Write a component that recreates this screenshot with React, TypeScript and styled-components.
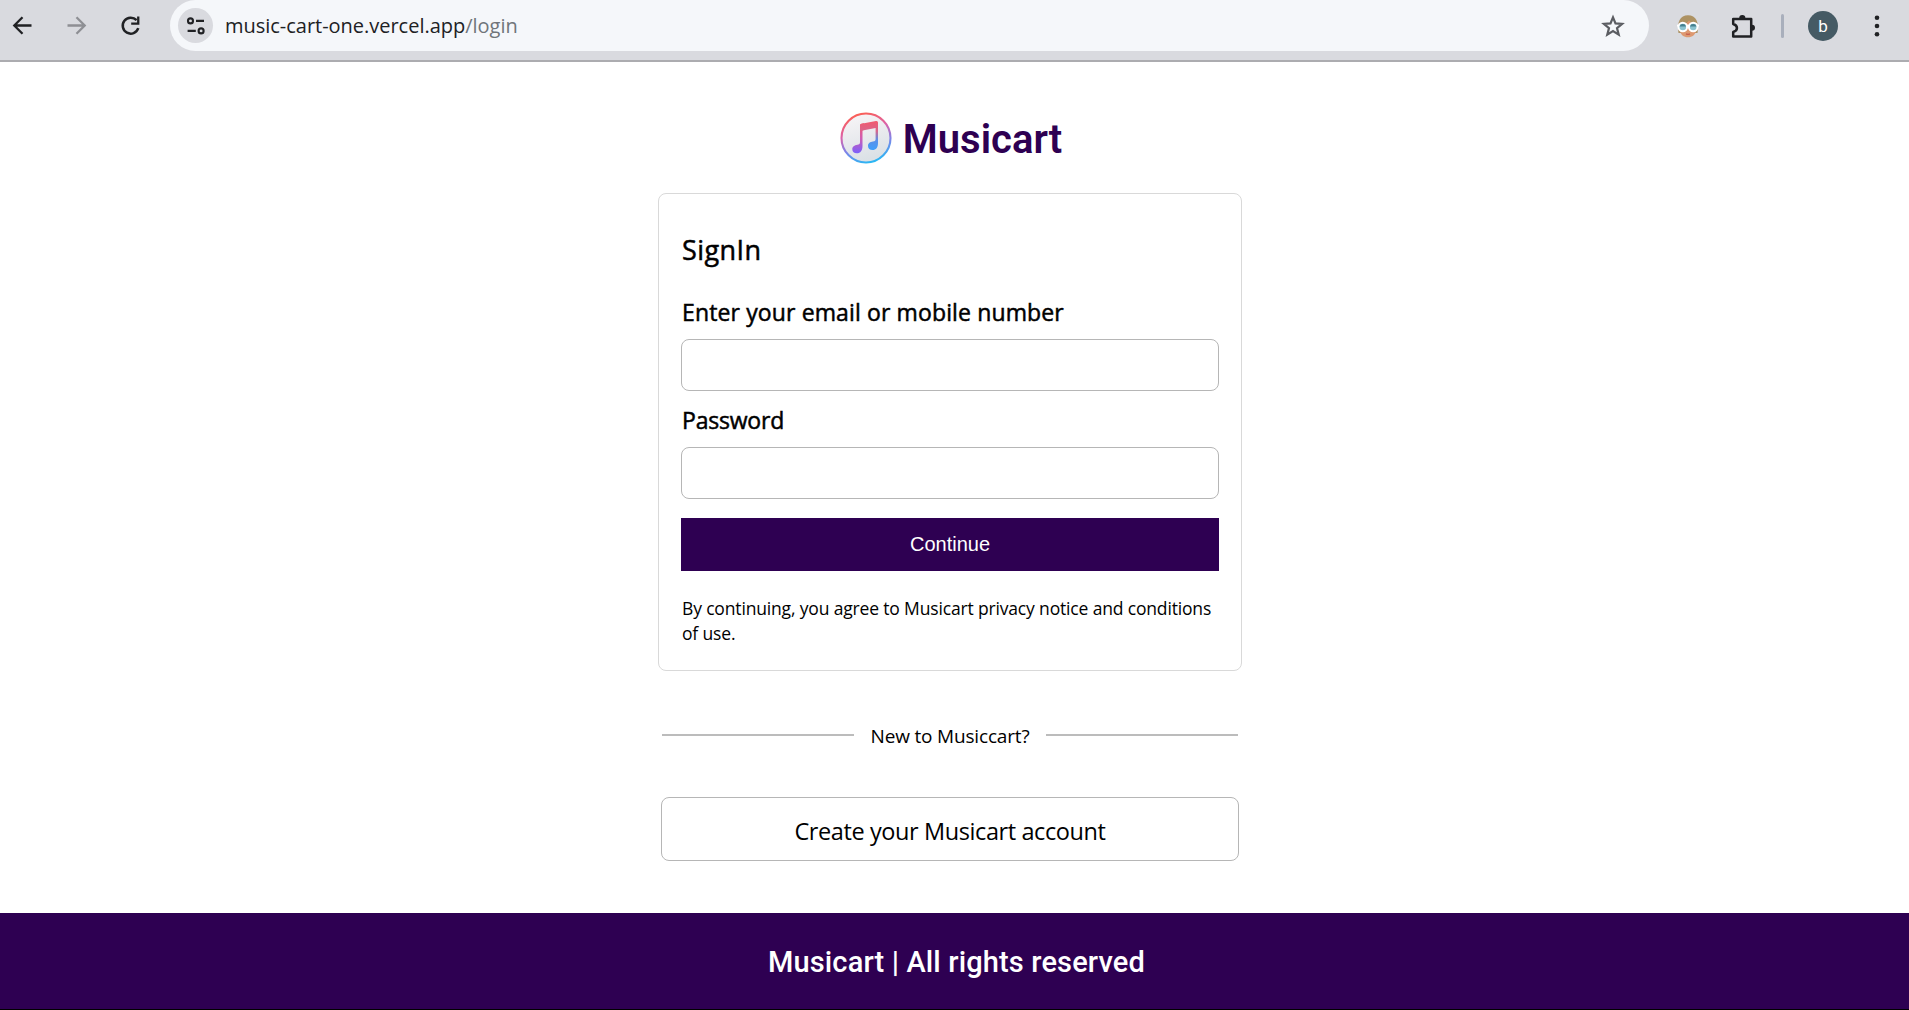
import React from 'react';
import styled, { createGlobalStyle, css } from 'styled-components';

const ui = `'Open Sans', 'Noto Sans', sans-serif`;
const purple = '#2e0052';

const Global = createGlobalStyle`
  * { box-sizing: border-box; }
  body { margin: 0; background: #fff; color: #000; font-family: ${ui}; }
`;

const Page = styled.div`
  display: flex;
  flex-direction: column;
  height: 1010px;
  overflow: hidden;
`;

const Toolbar = styled.header`
  display: flex;
  align-items: flex-start;
  height: 62px;
  background: #d9dadf;
  border-bottom: 2px solid #acacb0;
`;

const NavGroup = styled.div`
  display: flex;
  align-items: center;
  gap: 29px;
  width: 170px;
  height: 51px;
  padding-left: 10px;
`;

const AddressBar = styled.div`
  display: flex;
  align-items: center;
  width: 1479px;
  height: 51px;
  padding: 0 24px 0 8px;
  border-radius: 26px;
  background: #f5f7fa;
`;

const SiteInfo = styled.span`
  display: flex;
  align-items: center;
  justify-content: center;
  width: 35px;
  height: 35px;
  border-radius: 50%;
  background: #d9dadf;
`;

const Url = styled.span`
  flex: 1;
  padding-left: 12px;
  color: #202124;
`;

const Muted = styled.span`
  color: #70757a;
`;

const Actions = styled.div`
  display: flex;
  align-items: center;
  height: 51px;
  padding-left: 27px;
`;

const Extensions = styled.div`
  display: flex;
  align-items: center;
  gap: 30px;
`;

const Separator = styled.span`
  width: 3px;
  height: 24px;
  margin: 0 24px 0 25px;
  border-radius: 2px;
  background: #a9afbc;
`;

const Avatar = styled.span`
  display: flex;
  align-items: center;
  justify-content: center;
  width: 30px;
  height: 30px;
  margin-right: 36px;
  border-radius: 50%;
  background: #455a64;
  color: #fff;
  font: 400 17px/30px Roboto, sans-serif;
`;

const Main = styled.main`
  display: flex;
  flex-direction: column;
  align-items: center;
  height: 851px;
  padding-right: 9px;
`;

const Brand = styled.div`
  display: flex;
  align-items: center;
  gap: 11px;
  height: 52px;
  margin: 50px 0 29px;
  padding-left: 2px;
`;

const BrandName = styled.span`
  padding-top: 3px;
  color: ${purple};
  font: 600 40px/48px Roboto, sans-serif;
`;

const Line = styled.span<{ $size: number; $track?: number; $medium?: boolean }>`
  font-size: ${p => p.$size}px;
  letter-spacing: ${p => p.$track ?? 0}px;
  white-space: nowrap;
  ${p => p.$medium && css`-webkit-text-stroke: 0.5px currentColor;`}
`;

const Card = styled.form`
  display: flex;
  flex-direction: column;
  width: 584px;
  height: 478px;
  padding: 36px 22px 0;
  border: 1px solid #d9d9d9;
  border-radius: 8px;
`;

const Title = styled.h1`
  height: 36px;
  margin: 0 0 31px;
  padding-left: 1px;
  font-weight: 400;
  line-height: 36px;
`;

const Field = styled.label`
  display: flex;
  flex-direction: column;
`;

const Label = styled.span`
  height: 30px;
  margin-bottom: 12px;
  padding-left: 1px;
  line-height: 30px;
`;

const fieldBorder = css`
  border: 1px solid #b6b6b6;
  border-radius: 8px;
`;

const Input = styled.input`
  width: 538px;
  height: 52px;
  padding: 0 12px;
  background: #fff;
  ${fieldBorder}
`;

const Fields = styled.div`
  display: grid;
  row-gap: 14px;
  margin-bottom: 19px;
`;

const Submit = styled.button`
  width: 538px;
  height: 53px;
  border: 0;
  background: ${purple};
  color: #fff;
  font: 400 20px 'Liberation Sans', Arial, sans-serif;
`;

const Notice = styled.p`
  margin: 26px 0 0;
  padding-left: 1px;
  line-height: 23.5px;
`;

const Divider = styled.div`
  display: flex;
  align-items: center;
  justify-content: space-between;
  width: 576px;
  height: 30px;
  margin-top: 49px;
`;

const DividerText = styled.span`
  padding-top: 2px;
`;

const Rule = styled.span`
  width: 192px;
  height: 2px;
  background: #bcbcbc;
`;

const Create = styled.button`
  width: 578px;
  height: 64px;
  margin-top: 47px;
  padding: 3px 0 0;
  background: #fff;
  color: #000;
  font-family: ${ui};
  ${fieldBorder}
`;

const Footer = styled.footer`
  display: flex;
  align-items: center;
  justify-content: center;
  height: 97px;
  padding: 2px 0 0 4px;
  border-bottom: 1px solid #000;
  background: ${purple};
  color: #fff;
  font: 500 29px/40px Roboto, sans-serif;
  letter-spacing: 0.15px;
`;

const Arrow = ({ forward = false }: { forward?: boolean }) => (
  <svg width="25" height="25" viewBox="0 0 25 25" fill="none" stroke={forward ? '#8e8f94' : '#202124'} strokeWidth="2.3">
    <path d={forward ? 'M3.5 12.5H20M12.5 4.3l8.2 8.2-8.2 8.2' : 'M21.5 12.5H5M12.5 4.3l-8.2 8.2 8.2 8.2'} />
  </svg>
);

const Reload = () => (
  <svg width="25" height="25" viewBox="0 0 25 25">
    <path d="M18.6 7.2A8 8 0 1 0 20.3 15.2" fill="none" stroke="#202124" strokeWidth="2.5" />
    <path d="M19.1 3.6h2.3v8.2h-8.2V9.5h5.9z" fill="#202124" />
  </svg>
);

const Tune = () => (
  <svg width="20" height="20" viewBox="0 0 20 20" fill="none" stroke="#202124" strokeWidth="2.1">
    <circle cx="4.5" cy="4.9" r="2.5" />
    <path d="M10 4.9H18M1.600 14.900H9.800" />
    <circle cx="15.1" cy="14.9" r="2.5" />
  </svg>
);

const Star = () => (
  <svg width="24" height="24" viewBox="0 0 24 24" fill="none" stroke="#5b5d62" strokeWidth="2.2">
    <path d="M12 3.300l2.500 6.100 6.600.5-5.100 4.200 1.700 6.500-5.700-3.600-5.700 3.600 1.700-6.500-5.100-4.200 6.600-.5z" />
  </svg>
);

const Face = () => (
  <svg width="24" height="24" viewBox="0 0 24 24">
    <path d="M2.500 19C0.800 8 4 1.200 12 1.200S23.200 8 21.500 19z" fill="#ad9263" />
    <path d="M4 11c4-.3 7.500-2 9-4.500 2 2.300 5 4 7 4.500v5c0 4.700-4 7.300-8 7.300S4 20.700 4 16z" fill="#dd9870" />
    <path d="M1 11.600h22" stroke="#fff" strokeWidth="1.800" />
    <circle cx="6.800" cy="13" r="4.300" fill="#8cc3cf" stroke="#fff" strokeWidth="2" />
    <circle cx="17.200" cy="13" r="4.300" fill="#8cc3cf" stroke="#fff" strokeWidth="2" />
    <path d="M3.600 12.500a3.300 3.300 0 0 1 6.400 0zM14 12.500a3.300 3.300 0 0 1 6.400 0z" fill="#457f8e" />
    <path d="M10 19.800q2 1 4 0" fill="none" stroke="#c9604f" strokeWidth="1.300" />
  </svg>
);

const Puzzle = () => (
  <svg width="26" height="26" viewBox="0 0 26 26">
    <path d="M3.200 6h18v17.500h-18V19c5-1.500 5-6.500 0-8z" fill="none" stroke="#202124" strokeWidth="2.500" strokeLinejoin="round" />
    <path d="M9.200 5a3.100 3.100 0 0 1 6.200 0zM22 11.700a2.800 2.800 0 0 1 0 6z" fill="#202124" />
  </svg>
);

const Dots = () => (
  <svg width="6" height="24" viewBox="0 0 6 24" fill="#202124">
    <circle cx="3" cy="3.700" r="2.300" />
    <circle cx="3" cy="12" r="2.300" />
    <circle cx="3" cy="20.300" r="2.300" />
  </svg>
);

const MusicLogo = () => (
  <svg width="52" height="52" viewBox="0 0 52 52">
    <defs>
      <linearGradient id="ring" x1="0.350" y1="0" x2="0.650" y2="1">
        <stop offset="0" stopColor="#fb5f55" />
        <stop offset="0.350" stopColor="#dc62a8" />
        <stop offset="0.650" stopColor="#7f83e8" />
        <stop offset="1" stopColor="#27b9f4" />
      </linearGradient>
      <linearGradient id="disc" x1="0" y1="0" x2="0.300" y2="1">
        <stop offset="0" stopColor="#faf6f8" />
        <stop offset="1" stopColor="#dbe1e6" />
      </linearGradient>
      <linearGradient id="left" x1="0" y1="0" x2="0" y2="1">
        <stop offset="0" stopColor="#f45a6b" />
        <stop offset="0.500" stopColor="#cf5db4" />
        <stop offset="1" stopColor="#7b60fb" />
      </linearGradient>
      <linearGradient id="right" x1="0" y1="0" x2="0" y2="1">
        <stop offset="0" stopColor="#f2596d" />
        <stop offset="0.350" stopColor="#d8668c" />
        <stop offset="0.650" stopColor="#5b8fe8" />
        <stop offset="1" stopColor="#3f9ffb" />
      </linearGradient>
    </defs>
    <circle cx="26" cy="26" r="24.500" fill="url(#disc)" stroke="url(#ring)" strokeWidth="2.100" />
    <path d="M20 13.500q0-1.500 1.500-1.800L24 11.200V18l-1.500.5V34c0 4.500-2 7.300-5.700 7.300-2.700 0-4.500-1.600-4.500-4 0-3 2.200-4 5-4.600 2-.4 2.700-.8 2.700-2.500z" fill="url(#left)" />
    <path d="M20 13.500q0-1.500 1.500-1.800L36 9q2-.3 2 1.500V31c0 4.500-2 7-5.500 7-2.700 0-4.500-1.500-4.500-4 0-3 2.200-4 5-4.500 2-.4 2.600-.8 2.600-2.500V16L22.500 18.500 20 19z" fill="url(#right)" />
  </svg>
);

export default function App() {
  return (
    <Page>
      <Global />
      <Toolbar>
        <NavGroup>
          <Arrow />
          <Arrow forward />
          <Reload />
        </NavGroup>
        <AddressBar>
          <SiteInfo><Tune /></SiteInfo>
          <Url><Line $size={20} $track={-0.02}>music-cart-one.vercel.app<Muted>/login</Muted></Line></Url>
          <Star />
        </AddressBar>
        <Actions>
          <Extensions>
            <Face />
            <Puzzle />
          </Extensions>
          <Separator />
          <Avatar>b</Avatar>
          <Dots />
        </Actions>
      </Toolbar>
      <Main>
        <Brand>
          <MusicLogo />
          <BrandName>Musicart</BrandName>
        </Brand>
        <Card onSubmit={e => e.preventDefault()}>
          <Title><Line $size={27} $track={0.4} $medium>SignIn</Line></Title>
          <Fields>
            <Field>
              <Label><Line $size={23} $track={0.13} $medium>Enter your email or mobile number</Line></Label>
              <Input type="text" />
            </Field>
            <Field>
              <Label><Line $size={23} $track={-0.2} $medium>Password</Line></Label>
              <Input type="password" />
            </Field>
          </Fields>
          <Submit>Continue</Submit>
          <Notice>
            <Line $size={17.5} $track={-0.16}>By continuing, you agree to Musicart privacy notice and conditions<br />of use.</Line>
          </Notice>
        </Card>
        <Divider>
          <Rule />
          <DividerText><Line $size={19} $track={-0.17}>New to Musiccart?</Line></DividerText>
          <Rule />
        </Divider>
        <Create><Line $size={23.5} $track={-0.4}>Create your Musicart account</Line></Create>
      </Main>
      <Footer>Musicart | All rights reserved</Footer>
    </Page>
  );
}
